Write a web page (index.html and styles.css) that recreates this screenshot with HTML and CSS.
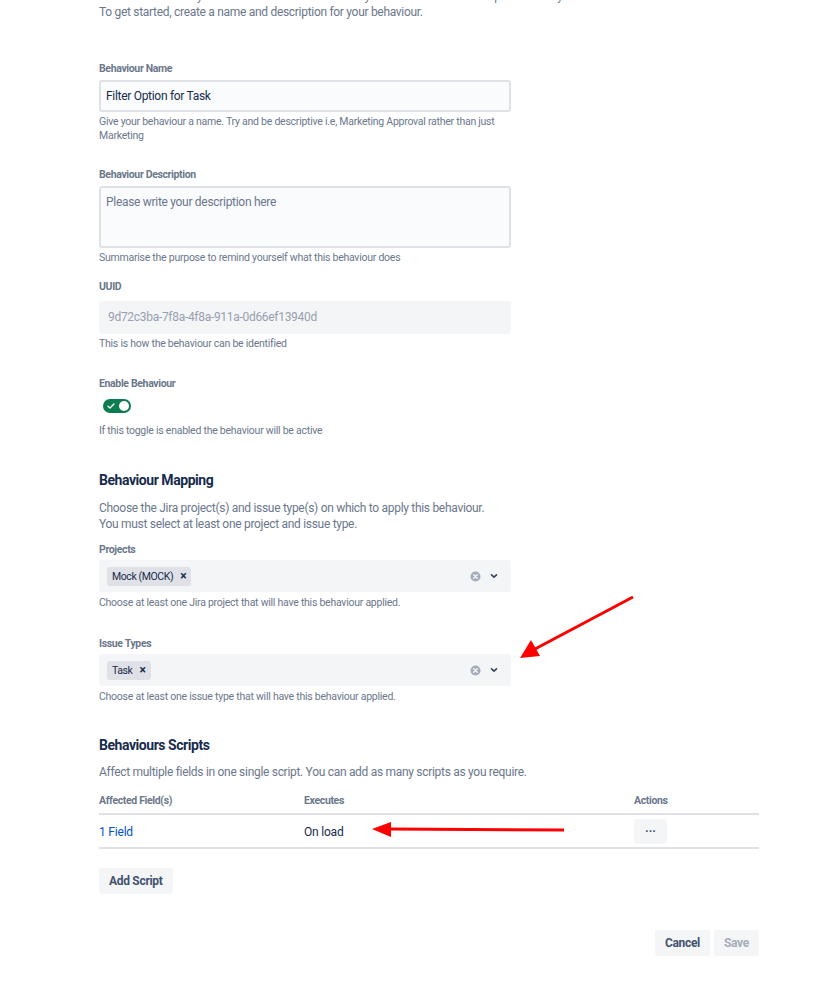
FILE: index.html
```html
<!DOCTYPE html>
<html>
  <head>
    <meta charset="utf-8">
    <link rel="stylesheet" href="styles.css">
  </head>
  <body>
    <div class="page">
      <p class="intro">
        This feature allows you to alter how fields behave on your issues for a better experience for your users.<br>
        To get started, create a name and description for your behaviour.
      </p>

      <div class="field first">
        <label class="label">Behaviour Name</label>
        <div class="input">Filter Option for Task</div>
        <p class="help">Give your behaviour a name. Try and be descriptive i.e, Marketing Approval rather than just Marketing</p>
      </div>

      <div class="field">
        <label class="label">Behaviour Description</label>
        <div class="input textarea placeholder">Please write your description here</div>
        <p class="help">Summarise the purpose to remind yourself what this behaviour does</p>
      </div>

      <div class="field tight">
        <label class="label">UUID</label>
        <div class="input disabled">9d72c3ba-7f8a-4f8a-911a-0d66ef13940d</div>
        <p class="help">This is how the behaviour can be identified</p>
      </div>

      <div class="field toggle-field">
        <label class="label toggle-label">Enable Behaviour</label>
        <div class="toggle">
          <svg class="check" width="8" height="8" viewBox="0 0 8 8"><path d="M1 4.2 L3 6 L7 2" fill="none" stroke="#fff" stroke-width="1.4" stroke-linecap="round" stroke-linejoin="round"/></svg>
          <span class="knob"></span>
        </div>
        <p class="help">If this toggle is enabled the behaviour will be active</p>
      </div>

      <h2 class="section-title">Behaviour Mapping</h2>
      <p class="section-text">
        Choose the Jira project(s) and issue type(s) on which to apply this behaviour.<br>
        You must select at least one project and issue type.
      </p>

      <div class="field after-text">
        <label class="label select-label">Projects</label>
        <div class="select">
          <span class="tag">Mock (MOCK) <span class="tag-x">&times;</span></span>
          <span class="select-icons">
            <svg width="11" height="11" viewBox="0 0 12 12"><circle cx="6" cy="6" r="5.5" fill="#a5adba"/><path d="M4 4 L8 8 M8 4 L4 8" stroke="#f4f5f7" stroke-width="1.5" stroke-linecap="round"/></svg>
            <svg width="10" height="10" viewBox="0 0 10 10"><path d="M2.5 3.8 L5 6.2 L7.5 3.8" fill="none" stroke="#344563" stroke-width="1.6" stroke-linecap="round" stroke-linejoin="round"/></svg>
          </span>
        </div>
        <p class="help select-help">Choose at least one Jira project that will have this behaviour applied.</p>
      </div>

      <div class="field spaced">
        <label class="label select-label">Issue Types</label>
        <div class="select">
          <span class="tag">Task <span class="tag-x">&times;</span></span>
          <span class="select-icons">
            <svg width="11" height="11" viewBox="0 0 12 12"><circle cx="6" cy="6" r="5.5" fill="#a5adba"/><path d="M4 4 L8 8 M8 4 L4 8" stroke="#f4f5f7" stroke-width="1.5" stroke-linecap="round"/></svg>
            <svg width="10" height="10" viewBox="0 0 10 10"><path d="M2.5 3.8 L5 6.2 L7.5 3.8" fill="none" stroke="#344563" stroke-width="1.6" stroke-linecap="round" stroke-linejoin="round"/></svg>
          </span>
        </div>
        <p class="help select-help">Choose at least one issue type that will have this behaviour applied.</p>
      </div>

      <h2 class="section-title scripts-title">Behaviours Scripts</h2>
      <p class="section-text scripts-text">Affect multiple fields in one single script. You can add as many scripts as you require.</p>

      <table class="scripts">
        <thead>
          <tr>
            <th class="col-fields">Affected Field(s)</th>
            <th class="col-exec">Executes</th>
            <th class="col-actions">Actions</th>
          </tr>
        </thead>
        <tbody>
          <tr>
            <td><a class="link" href="#">1 Field</a></td>
            <td>On load</td>
            <td><button class="more">&middot;&middot;&middot;</button></td>
          </tr>
        </tbody>
      </table>

      <button class="btn add-script">Add Script</button>

      <div class="footer">
        <button class="btn">Cancel</button>
        <button class="btn disabled">Save</button>
      </div>
    </div>

    <!-- annotation arrows drawn over the screenshot -->
    <svg class="annotations" width="821" height="998" viewBox="0 0 821 998">
      <line x1="633" y1="597" x2="535" y2="649" stroke="#f00" stroke-width="3"/>
      <polygon points="520,658 531,640 540,656" fill="#f00"/>
      <line x1="564" y1="830" x2="390" y2="829" stroke="#f00" stroke-width="3"/>
      <polygon points="372,829 391,822 391,837" fill="#f00"/>
    </svg>
  </body>
</html>
```

FILE: styles.css
```css
body {
  margin: 0;
  font-family: Roboto, "Liberation Sans", sans-serif;
  color: #172b4d;
  background: #fff;
}

.page {
  width: 660px;
  padding: 0 99px;
  overflow: hidden;
}

.intro {
  margin: -12px 0 0;
  font-size: 12px;
  line-height: 16px;
  letter-spacing: -0.3px;
  color: #6b778c;
}

.field {
  margin-top: 25px;
}
.field.first {
  margin-top: 42px;
}
.field.tight {
  margin-top: 15px;
}
.field.toggle-field {
  margin-top: 26px;
}
.field.after-text {
  margin-top: 11px;
}
.field.spaced {
  margin-top: 27px;
}

.label {
  display: block;
  font-size: 10.5px;
  line-height: 14px;
  letter-spacing: -0.35px;
  font-weight: 700;
  color: #6b778c;
  margin-bottom: 4px;
}
.tight .label {
  margin-bottom: 7px;
}
.toggle-label {
  margin-bottom: 8px;
}
.select-label {
  margin-bottom: 3px;
}

.input {
  width: 412px;
  box-sizing: border-box;
  height: 32px;
  border: 2px solid #dfe1e6;
  border-radius: 3px;
  background: #fafbfc;
  padding: 0 5px;
  font-size: 12px;
  letter-spacing: -0.3px;
  line-height: 28px;
  color: #172b4d;
}
.input.textarea {
  height: 62px;
  line-height: 16px;
  padding-top: 6px;
}
.placeholder {
  color: #6b778c;
}
.input.disabled {
  height: 33px;
  border-color: #f4f5f7;
  background: #f4f5f7;
  padding-left: 7px;
  color: #97a0af;
}

.help {
  margin: 3px 0 0;
  width: 412px;
  font-size: 10.5px;
  line-height: 14px;
  letter-spacing: -0.25px;
  color: #6b778c;
}
.select-help {
  margin-top: 4px;
}

.toggle {
  position: relative;
  width: 28px;
  height: 14px;
  margin: 0 0 11px 4px;
  border-radius: 7px;
  background: #0b7d51;
  display: flex;
  align-items: center;
}
.toggle .check {
  margin-left: 4px;
}
.toggle .knob {
  position: absolute;
  right: 2px;
  top: 2px;
  width: 10px;
  height: 10px;
  border-radius: 50%;
  background: #fff;
}

.section-title {
  margin: 34px 0 0;
  font-size: 14px;
  line-height: 16px;
  letter-spacing: -0.45px;
  font-weight: 700;
  color: #172b4d;
}
.scripts-title {
  margin-top: 33px;
}

.section-text {
  margin: 12px 0 0;
  font-size: 12px;
  line-height: 16px;
  letter-spacing: -0.3px;
  color: #6b778c;
}
.scripts-text {
  margin-top: 11px;
}

.select {
  width: 412px;
  height: 32px;
  box-sizing: border-box;
  background: #f4f5f7;
  border-radius: 3px;
  display: flex;
  align-items: center;
  padding: 0 12px 0 8px;
}
.tag {
  display: inline-flex;
  align-items: center;
  height: 19px;
  padding: 0 5px 0 5px;
  background: #dfe1e6;
  border-radius: 3px;
  font-size: 10.5px;
  letter-spacing: -0.4px;
  color: #172b4d;
}
.tag-x {
  margin-left: 7px;
  font-size: 12px;
  font-weight: 700;
}
.select-icons {
  margin-left: auto;
  display: flex;
  align-items: center;
  gap: 8px;
}

.scripts {
  margin-top: 14px;
  width: 660px;
  border-collapse: collapse;
}
.scripts th {
  text-align: left;
  font-size: 10.5px;
  letter-spacing: -0.35px;
  font-weight: 700;
  color: #6b778c;
  padding: 0 0 5px;
  line-height: 14px;
  border-bottom: 2px solid #dfe1e6;
}
.col-fields {
  width: 205px;
}
.col-exec {
  width: 330px;
}
.scripts td {
  padding: 4px 0 3px;
  font-size: 12px;
  letter-spacing: -0.2px;
  color: #172b4d;
  border-bottom: 2px solid #dfe1e6;
  height: 24px;
}
.link {
  color: #0052cc;
  text-decoration: none;
}
.more {
  width: 33px;
  height: 25px;
  border: 0;
  border-radius: 3px;
  background: #f4f5f7;
  color: #42526e;
  font-weight: 700;
  font-size: 12px;
  font-family: inherit;
  padding: 0;
}

.btn {
  border: 0;
  border-radius: 3px;
  background: #f4f5f7;
  color: #42526e;
  font-family: inherit;
  font-size: 12px;
  letter-spacing: -0.3px;
  font-weight: 700;
  height: 26px;
  padding: 0 10px;
}
.add-script {
  margin-top: 19px;
}
.btn.disabled {
  color: #a5adba;
}

.footer {
  margin-top: 36px;
  display: flex;
  justify-content: flex-end;
  gap: 4px;
}

.annotations {
  position: absolute;
  left: 0;
  top: 0;
  pointer-events: none;
}
```
